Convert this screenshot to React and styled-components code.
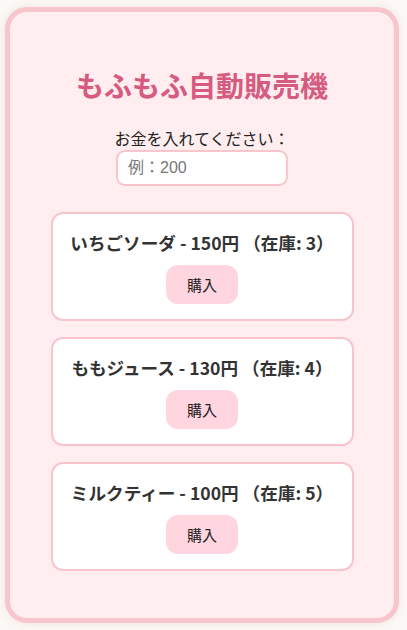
import React, { useState } from 'react';
import styled, { createGlobalStyle } from 'styled-components';

const GlobalStyle = createGlobalStyle`
  html, body {
    margin: 0;
    padding: 0;
    background: #fcf8f5;
    font-family: "Noto Sans CJK JP", "Noto Sans", sans-serif;
  }
`;

const Machine = styled.main`
  box-sizing: border-box;
  width: 394px;
  height: 616px;
  margin: 7px 8px 7px 5px;
  padding: 54px 45px 0;
  background: #ffedef;
  border: 5px solid #f8c5cc;
  border-radius: 22px;
  box-shadow: 0 0 10px rgba(200, 180, 170, 0.25);
  display: flex;
  flex-direction: column;
  align-items: center;
`;

const Title = styled.h1`
  margin: 0 0 21px;
  font-size: 28px;
  line-height: 39px;
  font-weight: 700;
  color: #d75a7f;
`;

const Label = styled.label`
  font-size: 16px;
  line-height: 24px;
  color: #222;
`;

const MoneyInput = styled.input`
  box-sizing: border-box;
  width: 172px;
  height: 36px;
  margin: 0 0 26px;
  padding: 0 10px;
  border: 2px solid #f8c5cc;
  border-radius: 9px;
  background: #fff;
  font-family: "Liberation Sans", "Noto Sans CJK JP", sans-serif;
  font-size: 16px;
  color: #333;
  outline: none;

  &::placeholder {
    color: #777;
  }
`;

const List = styled.div`
  width: 303px;
  display: flex;
  flex-direction: column;
  gap: 16px;
`;

const Card = styled.section`
  box-sizing: border-box;
  height: 109px;
  padding: 15px 8px 0;
  background: #fff;
  border: 2px solid #f8c5cc;
  border-radius: 12px;
  display: flex;
  flex-direction: column;
  align-items: center;
`;

const ItemName = styled.h2`
  margin: 0 0 8px;
  font-size: 17.6px;
  line-height: 28px;
  font-weight: 700;
  color: #333;
  white-space: nowrap;
`;

const BuyButton = styled.button`
  width: 72px;
  height: 39px;
  border: none;
  border-radius: 12px;
  background: #ffd5df;
  font-family: "Noto Sans CJK JP", sans-serif;
  font-size: 15px;
  color: #222;
  cursor: pointer;
`;

const items = [
  { name: 'いちごソーダ', price: 150, stock: 3 },
  { name: 'ももジュース', price: 130, stock: 4 },
  { name: 'ミルクティー', price: 100, stock: 5 },
];

export default function App() {
  const [money, setMoney] = useState('');
  return (
    <>
      <GlobalStyle />
      <Machine>
        <Title>もふもふ自動販売機</Title>
        <Label htmlFor="money">お金を入れてください：</Label>
        <MoneyInput
          id="money"
          type="number"
          placeholder="例：200"
          value={money}
          onChange={(e) => setMoney(e.target.value)}
        />
        <List>
          {items.map((item) => (
            <Card key={item.name}>
              <ItemName>
                {item.name} - {item.price}円 （在庫: {item.stock}）
              </ItemName>
              <BuyButton>購入</BuyButton>
            </Card>
          ))}
        </List>
      </Machine>
    </>
  );
}
